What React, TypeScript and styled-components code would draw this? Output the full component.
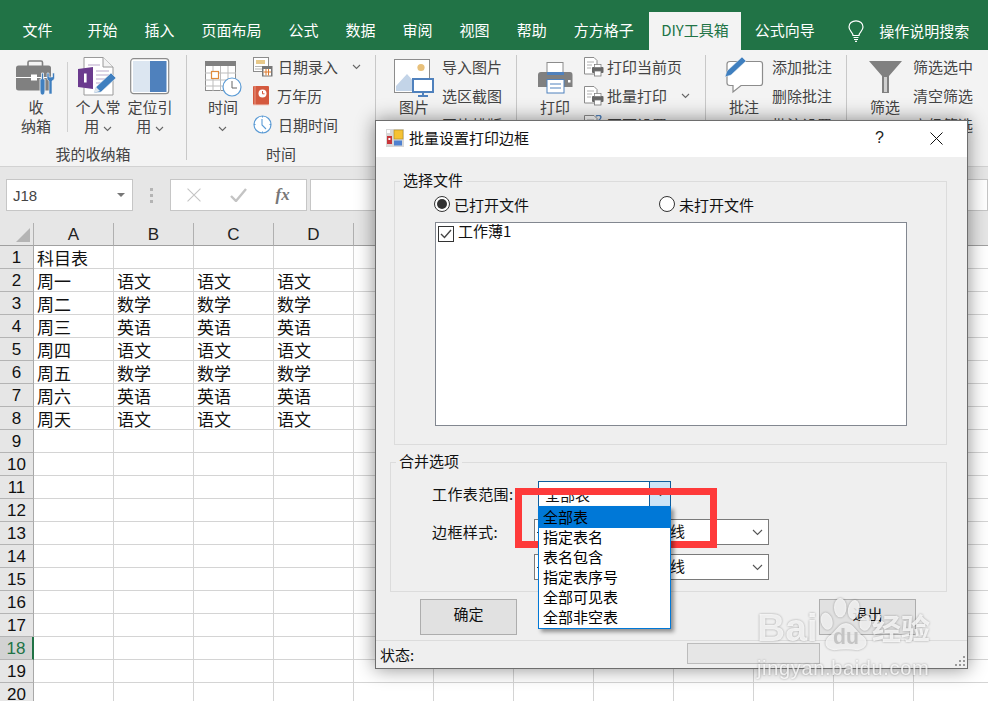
import React from 'react';
import styled, { createGlobalStyle } from 'styled-components';

const Global = createGlobalStyle`
  html, body {
    margin: 0;
    padding: 0;
    width: 988px;
    height: 701px;
    overflow: hidden;
    background: #fff;
    font-family: "Noto Sans CJK SC", "Liberation Sans", sans-serif;
  }
  * { box-sizing: border-box; }
`;

const Page = styled.div`
  position: relative;
  width: 988px;
  height: 701px;
  overflow: hidden;
  display: flex;
  flex-direction: column;
`;

/* ---------- tabs ---------- */

const TabBar = styled.div`
  height: 50px;
  flex: none;
  background: #217346;
  display: flex;
  align-items: flex-end;
  padding-left: 9px;
`;

const Tab = styled.div<{ $active?: boolean; $gap?: number }>`
  height: 38px;
  padding: 0 ${p => (p.$active ? 12.5 : 13.5)}px;
  margin-right: ${p => p.$gap ?? 0}px;
  margin-left: ${p => (p.$active ? 1.5 : 0)}px;
  font-size: 15px;
  line-height: 35px;
  white-space: nowrap;
  color: ${p => (p.$active ? '#217346' : '#fff')};
  background: ${p => (p.$active ? '#f3f3f3' : 'transparent')};
`;

const SearchHint = styled.div`
  display: flex;
  align-items: center;
  gap: 15px;
  height: 37px;
  margin: 0 0 1px 20px;
  color: #fff;
  font-size: 15px;
  white-space: nowrap;
`;

/* ---------- ribbon ---------- */

const Ribbon = styled.div`
  height: 117px;
  flex: none;
  background: #f3f3f3;
  border-bottom: 1px solid #d2d2d2;
  display: flex;
  padding-top: 5px;
  color: #444;
`;

const Group = styled.div<{ $width: number }>`
  width: ${p => p.$width}px;
  flex: none;
  height: 105px;
  border-right: 1px solid #c8c8c8;
  display: flex;
  flex-direction: column;
  &:last-child { border-right: 0; }
`;

const GroupItems = styled.div`
  flex: 1;
  display: flex;
  min-height: 0;
`;

const GroupLabel = styled.div`
  height: 22px;
  line-height: 20px;
  font-size: 15px;
  text-align: center;
  color: #444;
  margin-bottom: -6px;
`;

const BigButton = styled.div<{ $width: number; $left?: number }>`
  width: ${p => p.$width}px;
  margin-left: ${p => p.$left ?? 0}px;
  flex: none;
  display: flex;
  flex-direction: column;
  align-items: center;
`;

const BigIcon = styled.div<{ $lift?: number }>`
  height: 42px;
  padding-bottom: ${p => p.$lift ?? 0}px;
  display: flex;
  align-items: flex-end;
  justify-content: center;
`;

const BigLabel = styled.div`
  font-size: 15px;
  line-height: 19px;
  text-align: center;
  white-space: nowrap;
`;

const ItemDivider = styled.div`
  width: 1px;
  height: 70px;
  margin: 7px 0 0 6px;
  background: #d0d0d0;
  flex: none;
`;

const SmallColumn = styled.div<{ $left: number }>`
  margin-left: ${p => p.$left}px;
  margin-top: -3px;
  display: flex;
  flex-direction: column;
`;

const SmallRow = styled.div<{ $gap?: number }>`
  height: 29px;
  display: flex;
  align-items: center;
  gap: ${p => p.$gap ?? 5}px;
  font-size: 15px;
  white-space: nowrap;
`;

const RowChevron = styled.span<{ $left: number }>`
  display: inline-flex;
  margin-left: ${p => p.$left}px;
`;

/* ---------- formula bar ---------- */

const FormulaBar = styled.div`
  height: 56px;
  flex: none;
  background: #e6e6e6;
  display: flex;
  align-items: flex-start;
  padding: 12px 0 0 6px;
`;

const NameBox = styled.div`
  width: 127px;
  height: 32px;
  background: #fff;
  border: 1px solid #c6c6c6;
  display: flex;
  align-items: center;
  justify-content: space-between;
  padding: 0 7px 0 6px;
  font: 15px "Liberation Sans", sans-serif;
  color: #444;
`;

const Caret = styled.span`
  width: 0;
  height: 0;
  border-left: 4px solid transparent;
  border-right: 4px solid transparent;
  border-top: 4px solid #777;
`;

const Grip = styled.div`
  width: 37px;
  height: 32px;
  display: flex;
  flex-direction: column;
  align-items: center;
  justify-content: center;
  gap: 3px;
  span {
    width: 3px;
    height: 3px;
    background: #b4b4b4;
  }
`;

const FxBox = styled.div`
  width: 137px;
  height: 32px;
  background: #fff;
  border: 1px solid #c6c6c6;
  display: flex;
  align-items: center;
  justify-content: space-around;
  padding: 0 2px;
`;

const FxGlyph = styled.span`
  font: italic bold 17px "Liberation Serif", serif;
  color: #777;
`;

const FormulaInput = styled.div`
  flex: 1;
  height: 32px;
  margin-left: 3px;
  background: #fff;
  border: 1px solid #c6c6c6;
`;

/* ---------- sheet ---------- */

const Sheet = styled.div`
  flex: 1;
  display: grid;
  grid-template-columns: 34px repeat(12, 80px);
  grid-auto-rows: 23px;
  background: #fff;
  overflow: hidden;
`;

const Corner = styled.div`
  background: #e6e6e6;
  border-right: 1px solid #b0b0b0;
  border-bottom: 1px solid #a0a0a0;
  display: flex;
  align-items: flex-end;
  justify-content: flex-end;
  padding: 0 3px 3px 0;
  &::after {
    content: '';
    width: 0;
    height: 0;
    border-left: 14px solid transparent;
    border-bottom: 14px solid #b4b4b4;
  }
`;

const ColHead = styled.div`
  background: #e6e6e6;
  border-right: 1px solid #b0b0b0;
  border-bottom: 1px solid #a0a0a0;
  text-align: center;
  font: 17px/24px "Liberation Sans", sans-serif;
  color: #222;
`;

const RowHead = styled.div<{ $selected?: boolean }>`
  background: ${p => (p.$selected ? '#d2d2d2' : '#e6e6e6')};
  border-right: ${p => (p.$selected ? '2px solid #217346' : '1px solid #a8a8a8')};
  border-bottom: 1px solid #b4b4b4;
  text-align: center;
  font: 17px/24px "Liberation Sans", sans-serif;
  color: ${p => (p.$selected ? '#217346' : '#111')};
`;

const Cell = styled.div`
  border-right: 1px solid #d4d4d4;
  border-bottom: 1px solid #d4d4d4;
  padding-left: 3px;
  font-size: 17px;
  line-height: 24px;
  color: #111;
  white-space: nowrap;
`;

/* ---------- dialog ---------- */

const Dialog = styled.div`
  position: absolute;
  left: 375px;
  top: 120px;
  width: 593px;
  height: 549px;
  background: #efefef;
  border: 1px solid #6e6e6e;
  box-shadow: 0 0 18px rgba(0, 0, 0, 0.45);
  display: flex;
  flex-direction: column;
  font-size: 15px;
  color: #111;
`;

const TitleBar = styled.div`
  height: 36px;
  flex: none;
  background: #fff;
  display: flex;
  align-items: center;
  padding: 0 0 2px 10px;
  margin-bottom: 13px;
`;

const TitleText = styled.div`
  margin-left: 5px;
  flex: 1;
  color: #111;
  line-height: 20px;
`;

const TitleHelp = styled.div`
  width: 57px;
  text-align: center;
  font: 16px "Liberation Sans", sans-serif;
  color: #222;
`;

const TitleClose = styled.div`
  width: 57px;
  margin-right: 2px;
  display: flex;
  justify-content: center;
`;

const Section = styled.fieldset<{ $left: number; $width: number; $top?: number }>`
  margin: ${p => p.$top ?? 0}px 0 0 ${p => p.$left}px;
  width: ${p => p.$width}px;
  padding: 0;
  border: 1px solid #dcdcdc;
  flex: none;
  min-width: 0;
`;

const SectionTitle = styled.legend<{ $offset: number }>`
  margin-left: ${p => p.$offset}px;
  padding: 0 3px 3px;
  font-size: 15px;
  line-height: 19px;
`;

const FileBody = styled.div`
  padding: 2px 39px 18px 40px;
`;

const RadioRow = styled.div`
  height: 20px;
  display: flex;
  align-items: center;
  gap: 130px;
  margin-bottom: 8px;
  margin-left: -1px;
`;

const RadioItem = styled.div`
  display: flex;
  align-items: center;
  gap: 4px;
`;

const RadioMark = styled.span<{ $checked?: boolean }>`
  width: 16px;
  height: 16px;
  border-radius: 50%;
  border: 1px solid #333;
  background: #fff;
  display: flex;
  align-items: center;
  justify-content: center;
  &::after {
    content: '';
    width: 10px;
    height: 10px;
    border-radius: 50%;
    background: ${p => (p.$checked ? '#333' : 'transparent')};
  }
`;

const FileList = styled.div`
  width: 472px;
  height: 204px;
  background: #fff;
  border: 1px solid #828790;
  padding: 2px;
`;

const FileRow = styled.div`
  display: flex;
  gap: 4px;
`;

const FileName = styled.span`
  line-height: 12px;
`;

const CheckMark = styled.span`
  width: 16px;
  height: 16px;
  margin-top: 1px;
  border: 1px solid #333;
  background: #fff;
  display: flex;
  align-items: center;
  justify-content: center;
`;

const OptionBody = styled.div`
  padding: 8px 0 11px 41px;
`;

const OptionRow = styled.div<{ $top?: number }>`
  display: flex;
  align-items: center;
  height: 26px;
  margin-top: ${p => p.$top ?? 0}px;
`;

const OptionLabel = styled.div`
  width: 102px;
  flex: none;
  white-space: nowrap;
  line-height: 22px;
  letter-spacing: 0.4px;
`;

const Combo = styled.div<{ $width: number; $open?: boolean; $left?: number }>`
  position: relative;
  width: ${p => p.$width}px;
  height: 26px;
  margin-left: ${p => p.$left ?? 0}px;
  background: #fff;
  border: 1px solid ${p => (p.$open ? '#0f5d9c' : '#7a7a7a')};
  display: flex;
  align-items: center;
`;

const ComboValue = styled.div`
  flex: 1;
  padding-left: 6px;
  white-space: nowrap;
`;

const LineSample = styled.span`
  flex: none;
  width: 105px;
  padding-left: 2px;
  &::before {
    content: '';
    display: block;
    width: 100px;
    border-top: 1px solid #333;
  }
`;

const LineName = styled.span`
  flex: 1;
  white-space: nowrap;
  line-height: 20px;
  padding-bottom: 3px;
`;

const ComboArrow = styled.div<{ $open?: boolean }>`
  width: 21px;
  height: 100%;
  flex: none;
  display: flex;
  align-items: center;
  justify-content: center;
  background: ${p => (p.$open ? '#cce4f7' : 'transparent')};
  border-left: ${p => (p.$open ? '1px solid #0f5d9c' : '0')};
`;

const ComboMenu = styled.div`
  position: absolute;
  left: -1px;
  top: 24px;
  width: 133px;
  background: #fff;
  border: 1px solid #0078d7;
  box-shadow: 3px 3px 4px rgba(0, 0, 0, 0.4);
  z-index: 2;
`;

const ComboOption = styled.div<{ $selected?: boolean }>`
  height: ${p => (p.$selected ? 21 : 20)}px;
  line-height: ${p => (p.$selected ? 20 : 18)}px;
  padding-left: 4px;
  background: ${p => (p.$selected ? '#0078d7' : 'transparent')};
  color: #000;
`;

const ButtonRow = styled.div`
  display: flex;
  gap: 302px;
  padding: 7px 0 0 44px;
`;

const DialogButton = styled.div`
  width: 97px;
  height: 36px;
  background: #e1e1e1;
  border: 1px solid #adadad;
  text-align: center;
  line-height: 28px;
  color: #111;
`;

const StatusBar = styled.div`
  margin-top: 5px;
  flex: 1;
  border-top: 1px solid #dcdcdc;
  display: flex;
  align-items: flex-start;
  padding: 2px 0 0 4px;
  position: relative;
`;

const StatusText = styled.div`
  width: 307px;
  line-height: 22px;
  margin-top: 1px;
`;

const ProgressBar = styled.div`
  width: 133px;
  height: 21px;
  background: #e6e6e6;
  border: 1px solid #bcbcbc;
`;

const ResizeGrip = styled.svg`
  position: absolute;
  right: 1px;
  bottom: 1px;
`;

/* ---------- overlays ---------- */

const RedFrame = styled.div`
  position: absolute;
  left: 515px;
  top: 488px;
  width: 202px;
  height: 60px;
  border: 7px solid #fe3a3a;
`;

const Watermark = styled.div`
  position: absolute;
  left: 757px;
  top: 596px;
  width: 180px;
  color: rgba(255, 255, 255, 0.8);
  filter: drop-shadow(0 0 1px rgba(0, 0, 0, 0.4));
  pointer-events: none;
`;

const MarkTop = styled.div`
  display: flex;
  align-items: flex-end;
  height: 58px;
`;

const MarkLatin = styled.span`
  font: bold 39px/44px "Liberation Sans", sans-serif;
  margin-bottom: 4px;
  width: 62px;
  flex: none;
`;

const MarkCjk = styled.span`
  font-size: 29px;
  font-weight: 700;
  line-height: 36px;
  margin: 0 0 9px -1px;
  white-space: nowrap;
`;

const MarkUrl = styled.div`
  font: 20px/22px "Liberation Sans", sans-serif;
  letter-spacing: 0.65px;
  white-space: nowrap;
  margin-top: 3px;
`;

/* ---------- drawings ---------- */

const Chevron = ({ color = '#666' }: { color?: string }) => (
  <svg width="9" height="6" viewBox="0 0 9 6">
    <path d="M1 1 L4.5 4.5 L8 1" fill="none" stroke={color} strokeWidth="1.1" />
  </svg>
);

const ComboChevron = () => (
  <svg width="11" height="7" viewBox="0 0 11 7">
    <path d="M1 1 L5.5 5.5 L10 1" fill="none" stroke="#555" strokeWidth="1.1" />
  </svg>
);

const Bulb = () => (
  <svg width="16" height="22" viewBox="0 0 16 22" fill="none" stroke="#fff" strokeWidth="1.2">
    <path d="M5 15.5 C5 12.5 1 11 1 7 C1 3.3 4 .8 8 .8 C12 .8 15 3.3 15 7 C15 11 11 12.5 11 15.5 Z" />
    <path d="M5.5 17.5 H10.5 M6 19.5 H10 M7 21.3 H9" />
  </svg>
);

const BriefcaseIcon = () => (
  <svg width="40" height="38" viewBox="0 0 40 38">
    <path d="M12 8 V3.5 Q12 2 13.5 2 H25 Q26.5 2 26.5 3.5 V8" fill="none" stroke="#808080" strokeWidth="1.6" />
    <rect x="0" y="6.5" width="35" height="25" rx="2.5" fill="#808080" />
    <path d="M0 18.5 H35" stroke="#fff" strokeWidth="1" />
    <rect x="15" y="15.5" width="6" height="6" fill="#fff" />
    <path d="M25.5 14 V20 H24 V31 Q24 36 26.5 36 Q29 36 29 31 V20 H27.5 V14 Z" fill="#3f7fbf" stroke="#f3f3f3" strokeWidth=".8" />
    <path d="M31 14 V19 Q31 21 33 22 V35 H36 V22 Q38.5 21 38.5 19 V14 L36.5 14 V18 H33 V14 Z" fill="#3f7fbf" stroke="#f3f3f3" strokeWidth=".6" />
  </svg>
);

const NotebookIcon = () => (
  <svg width="40" height="40" viewBox="0 0 40 40">
    <path d="M6 .5 H25 L35 10 V38 H6 Z" fill="#fff" stroke="#9a9a9a" />
    <path d="M25 .5 V10 H35" fill="#f3f3f3" stroke="#9a9a9a" />
    <path d="M10 8 H22 M18 14 H31 M18 18 H31 M18 22 H31 M18 26 H28" stroke="#b9a7c9" strokeWidth="1.1" />
    <path d="M0 12 L15 10 V32 L0 30 Z" fill="#6b3a8e" />
    <rect x="6" y="16.5" width="2.6" height="9" fill="#fff" />
    <path d="M16 36 L18 30 L33 16 L38 21 L23 35 Z" fill="#3f7fbf" stroke="#f3f3f3" strokeWidth=".6" />
    <path d="M16 36 L18 30 L22 34 Z" fill="#dfe7ef" />
  </svg>
);

const PanelIcon = () => (
  <svg width="40" height="37" viewBox="0 0 40 37">
    <rect x=".7" y=".7" width="38" height="35" rx="3" fill="#fff" stroke="#8c8c8c" strokeWidth="1.2" />
    <rect x="3" y="3" width="17" height="31" fill="#dce6f1" />
    <rect x="20" y="3" width="16.5" height="31" fill="#4f81bd" />
  </svg>
);

const CalendarClockIcon = () => (
  <svg width="37" height="36" viewBox="0 0 37 36">
    <rect x=".5" y=".5" width="30" height="29" fill="#fff" stroke="#8c8c8c" />
    <rect x="0" y="0" width="31" height="5" fill="#808080" />
    <path d="M8 5 V30 M15.5 5 V30 M23 5 V30 M0 12 H31 M0 19 H31 M0 25 H31" stroke="#bdbdbd" strokeWidth="1" />
    <rect x="6.5" y="10.5" width="7" height="7" fill="#fff" stroke="#e08a3c" strokeWidth="1.2" />
    <circle cx="27" cy="26" r="9" fill="#fff" stroke="#5b9bd5" strokeWidth="1.2" />
    <path d="M27 20 V27 H32" fill="none" stroke="#666" strokeWidth="1" />
  </svg>
);

const DateEntryIcon = () => (
  <svg width="20" height="20" viewBox="0 0 20 20">
    <rect x=".5" y=".5" width="15" height="14" fill="#fff" stroke="#8c8c8c" />
    <rect x="3" y="3" width="9" height="4" fill="#e8c98a" />
    <path d="M2 9.5 H14 M2 12 H14" stroke="#b5b5b5" />
    <rect x="9" y="9" width="10.5" height="10.5" fill="#777" />
    <rect x="10.5" y="12" width="7.5" height="6.5" fill="#fff" />
    <path d="M13 12 V18.5 M15.5 12 V18.5 M10.5 15 H18" stroke="#dd7a2e" />
  </svg>
);

const AlmanacIcon = () => (
  <svg width="16" height="20" viewBox="0 0 16 20">
    <rect x="0" y="0" width="16" height="19" rx="1" fill="#d4593e" />
    <path d="M2 0 V19" stroke="#f0b5a6" strokeWidth=".7" />
    <path d="M0 19 H16" stroke="#f3d0c6" strokeWidth="1" />
    <circle cx="9.5" cy="7.5" r="4" fill="#fff" />
    <path d="M9.5 5 V7.8 H11.5" fill="none" stroke="#d4593e" />
  </svg>
);

const ClockIcon = () => (
  <svg width="19" height="19" viewBox="0 0 19 19">
    <circle cx="9.5" cy="9.5" r="8.5" fill="#fff" stroke="#5b9bd5" strokeWidth="1.2" />
    <path d="M9 4 V10 L13 14" fill="none" stroke="#5b9bd5" strokeWidth="1.1" />
    <path d="M9.5 1 V2.5 M9.5 16.5 V18 M1 9.5 H2.5 M16.5 9.5 H18" stroke="#5b9bd5" />
  </svg>
);

const PictureIcon = () => (
  <svg width="40" height="38" viewBox="0 0 40 38">
    <rect x=".5" y=".5" width="35" height="33" fill="#fff" stroke="#8c8c8c" />
    <circle cx="27" cy="8.5" r="3.6" fill="#e8c07a" />
    <path d="M2 32 L2 27 L13 15 L21 24 L28 32 Z" fill="#c3d4e8" />
    <rect x="19" y="20" width="20" height="13" fill="#fff" stroke="#4f81bd" strokeWidth="2" />
    <path d="M29 33 V36 M24 37 H34" stroke="#4f81bd" strokeWidth="2" />
  </svg>
);

const PrinterIcon = () => (
  <svg width="35" height="32" viewBox="0 0 35 32">
    <rect x="9" y="0.5" width="16" height="11" fill="#fff" stroke="#8c8c8c" />
    <path d="M3 10 H32 Q34.5 10 34.5 13 V25 H0 V13 Q0 10 3 10 Z" fill="#808080" />
    <rect x="9" y="10" width="17" height="3" fill="#4f81bd" />
    <rect x="30" y="18" width="2.5" height="2.5" fill="#fff" />
    <rect x="9" y="17.5" width="17" height="13.5" fill="#fff" stroke="#4f81bd" />
    <path d="M12 22 H23 M12 26 H23" stroke="#4f81bd" />
  </svg>
);

const PageIcon = ({ question }: { question?: boolean }) => (
  <svg width="20" height="20" viewBox="0 0 20 20">
    <path d="M.5 .5 H10 L13 3.5 V17 H.5 Z" fill="#fff" stroke="#8c8c8c" />
    <path d="M3 5 H10 M3 8 H8 M3 11 H7" stroke="#b0b0b0" />
    {question && <path d="M12 1 Q16 -1 17 2 Q17 4 14 6" fill="none" stroke="#4f81bd" strokeWidth="1.4" />}
    <rect x="8" y="10" width="11.5" height="6" rx="1" fill="#666" />
    <rect x="10.5" y="7.5" width="6.5" height="3" fill="#fff" stroke="#777" strokeWidth=".7" />
    <rect x="10.5" y="14" width="6.5" height="5" fill="#fff" stroke="#777" strokeWidth=".8" />
  </svg>
);

const CommentIcon = () => (
  <svg width="40" height="38" viewBox="0 0 40 38">
    <path d="M6 5.5 H36 Q38.5 5.5 38.5 8 V27 Q38.5 29.5 36 29.5 H17 L9 36 V29.5 H6 Q3 29.5 3 27 V8 Q3 5.5 6 5.5 Z" fill="#fff" stroke="#8c8c8c" strokeWidth="1.2" />
    <path d="M1 21 L3 15 L18 1 L22 5 L7 19 Z" fill="#3f7fbf" stroke="#f3f3f3" strokeWidth=".5" />
  </svg>
);

const FunnelIcon = () => (
  <svg width="33" height="33" viewBox="0 0 33 33">
    <path d="M0 0 H33 L20 15 V32 H13 V15 Z" fill="#808080" />
    <path d="M15 16 V31 H18 V16 Z" fill="#cfcfcf" />
  </svg>
);

const DialogIcon = () => (
  <svg width="18" height="18" viewBox="0 0 18 18">
    <rect width="18" height="18" fill="#d8d8d8" />
    <rect x="8" y="1" width="9" height="9" fill="#f6c233" stroke="#b08a20" strokeWidth=".6" />
    <rect x="1" y="7" width="5" height="8" fill="#c8353a" />
    <rect x="2.4" y="9" width="2" height="2" fill="#fff" />
    <rect x="8" y="11.5" width="8" height="5" fill="#4f81d0" />
    <rect x="1" y="1" width="3" height="3" fill="#fff" />
  </svg>
);

const CloseIcon = ({ color = '#111', size = 13 }: { color?: string; size?: number }) => (
  <svg width={size} height={size} viewBox="0 0 13 13">
    <path d="M.5 .5 L12.5 12.5 M12.5 .5 L.5 12.5" stroke={color} strokeWidth="1" fill="none" />
  </svg>
);

const PawIcon = () => (
  <svg width="54" height="58" viewBox="0 0 56 58">
    <g fill="rgba(255,255,255,.8)">
      <ellipse cx="8" cy="25" rx="6" ry="9" transform="rotate(-15 8 25)" />
      <ellipse cx="22" cy="11" rx="6.5" ry="10" />
      <ellipse cx="36" cy="13" rx="6" ry="10" transform="rotate(10 36 13)" />
      <ellipse cx="48" cy="27" rx="6" ry="8" transform="rotate(15 48 27)" />
      <path d="M28 27 C36 27 38 36 46 41 C54 48 46 56 38 55 C32 54 24 54 18 55 C8 56 3 48 10 41 C18 36 20 27 28 27 Z" />
    </g>
    <text x="28" y="49" textAnchor="middle" fontFamily="Liberation Sans, sans-serif" fontWeight="700" fontSize="22" fill="#c4c4c4">du</text>
  </svg>
);

/* ---------- data ---------- */

const tabs = ['文件', '开始', '插入', '页面布局', '公式', '数据', '审阅', '视图', '帮助', '方方格子'];
const columns = ['A', 'B', 'C', 'D', 'E', 'F', 'G', 'H', 'I', 'J', 'K', 'L'];
const rows: string[][] = [
  ['科目表'],
  ['周一', '语文', '语文', '语文'],
  ['周二', '数学', '数学', '数学'],
  ['周三', '英语', '英语', '英语'],
  ['周四', '语文', '语文', '语文'],
  ['周五', '数学', '数学', '数学'],
  ['周六', '英语', '英语', '英语'],
  ['周天', '语文', '语文', '语文'],
];
const rangeOptions = ['全部表', '指定表名', '表名包含', '指定表序号', '全部可见表', '全部非空表'];

const App = () => (
  <Page>
    <Global />
    <TabBar>
      {tabs.map((t, i) => (
        <Tab key={t} $gap={i === 0 ? 8 : 0}>{t}</Tab>
      ))}
      <Tab $active>DIY工具箱</Tab>
      <Tab>公式向导</Tab>
      <SearchHint>
        <Bulb />
        操作说明搜索
      </SearchHint>
    </TabBar>

    <Ribbon>
      <Group $width={187}>
        <GroupItems>
          <BigButton $width={50} $left={11}>
            <BigIcon><BriefcaseIcon /></BigIcon>
            <BigLabel>收<br />纳箱</BigLabel>
          </BigButton>
          <ItemDivider />
          <BigButton $width={52} $left={4}>
            <BigIcon><NotebookIcon /></BigIcon>
            <BigLabel>个人常<br />用 <Chevron /></BigLabel>
          </BigButton>
          <BigButton $width={52}>
            <BigIcon $lift={2}><PanelIcon /></BigIcon>
            <BigLabel>定位引<br />用 <Chevron /></BigLabel>
          </BigButton>
        </GroupItems>
        <GroupLabel>我的收纳箱</GroupLabel>
      </Group>

      <Group $width={189}>
        <GroupItems>
          <BigButton $width={40} $left={16}>
            <BigIcon><CalendarClockIcon /></BigIcon>
            <BigLabel>时间<br /><Chevron /></BigLabel>
          </BigButton>
          <SmallColumn $left={10}>
            <SmallRow><DateEntryIcon />日期录入<RowChevron $left={9}><Chevron /></RowChevron></SmallRow>
            <SmallRow $gap={8}><AlmanacIcon />万年历</SmallRow>
            <SmallRow $gap={6}><ClockIcon />日期时间</SmallRow>
          </SmallColumn>
        </GroupItems>
        <GroupLabel>时间</GroupLabel>
      </Group>

      <Group $width={141}>
        <GroupItems>
          <BigButton $width={40} $left={18}>
            <BigIcon><PictureIcon /></BigIcon>
            <BigLabel>图片</BigLabel>
          </BigButton>
          <SmallColumn $left={8}>
            <SmallRow>导入图片</SmallRow>
            <SmallRow>选区截图</SmallRow>
            <SmallRow>图片排版</SmallRow>
          </SmallColumn>
        </GroupItems>
      </Group>

      <Group $width={189}>
        <GroupItems>
          <BigButton $width={40} $left={18}>
            <BigIcon $lift={3}><PrinterIcon /></BigIcon>
            <BigLabel>打印</BigLabel>
          </BigButton>
          <SmallColumn $left={9}>
            <SmallRow $gap={3}><PageIcon />打印当前页</SmallRow>
            <SmallRow $gap={3}><PageIcon />批量打印<RowChevron $left={11}><Chevron /></RowChevron></SmallRow>
            <SmallRow $gap={3}><PageIcon question />页面设置</SmallRow>
          </SmallColumn>
        </GroupItems>
      </Group>

      <Group $width={141}>
        <GroupItems>
          <BigButton $width={40} $left={18}>
            <BigIcon $lift={3}><CommentIcon /></BigIcon>
            <BigLabel>批注</BigLabel>
          </BigButton>
          <SmallColumn $left={8}>
            <SmallRow>添加批注</SmallRow>
            <SmallRow>删除批注</SmallRow>
            <SmallRow>批注设置</SmallRow>
          </SmallColumn>
        </GroupItems>
      </Group>

      <Group $width={141}>
        <GroupItems>
          <BigButton $width={40} $left={18}>
            <BigIcon $lift={3}><FunnelIcon /></BigIcon>
            <BigLabel>筛选</BigLabel>
          </BigButton>
          <SmallColumn $left={8}>
            <SmallRow>筛选选中</SmallRow>
            <SmallRow>清空筛选</SmallRow>
            <SmallRow>高级筛选</SmallRow>
          </SmallColumn>
        </GroupItems>
      </Group>
    </Ribbon>

    <FormulaBar>
      <NameBox>J18<Caret /></NameBox>
      <Grip><span /><span /><span /></Grip>
      <FxBox>
        <CloseIcon color="#c4c4c4" size={14} />
        <svg width="17" height="14" viewBox="0 0 17 14">
          <path d="M1 8 L6 13 L16 1" fill="none" stroke="#c4c4c4" strokeWidth="2.4" />
        </svg>
        <FxGlyph>fx</FxGlyph>
      </FxBox>
      <FormulaInput />
    </FormulaBar>

    <Sheet>
      <Corner />
      {columns.map(c => <ColHead key={c}>{c}</ColHead>)}
      {Array.from({ length: 20 }, (_, r) => (
        <React.Fragment key={r}>
          <RowHead $selected={r === 17}>{r + 1}</RowHead>
          {columns.map((c, i) => <Cell key={c}>{rows[r]?.[i] ?? ''}</Cell>)}
        </React.Fragment>
      ))}
    </Sheet>

    <Dialog>
      <TitleBar>
        <DialogIcon />
        <TitleText>批量设置打印边框</TitleText>
        <TitleHelp>?</TitleHelp>
        <TitleClose><CloseIcon /></TitleClose>
      </TitleBar>

      <Section $left={18} $width={553}>
        <SectionTitle $offset={5}>选择文件</SectionTitle>
        <FileBody>
          <RadioRow>
            <RadioItem><RadioMark $checked />已打开文件</RadioItem>
            <RadioItem><RadioMark />未打开文件</RadioItem>
          </RadioRow>
          <FileList>
            <FileRow>
              <CheckMark>
                <svg width="12" height="10" viewBox="0 0 12 10">
                  <path d="M1 5 L4.5 8.5 L11 1" fill="none" stroke="#444" strokeWidth="1.4" />
                </svg>
              </CheckMark>
              <FileName>工作薄1</FileName>
            </FileRow>
          </FileList>
        </FileBody>
      </Section>

      <Section $left={14} $width={557} $top={6}>
        <SectionTitle $offset={5}>合并选项</SectionTitle>
        <OptionBody>
          <OptionRow>
            <OptionLabel>工作表范围:</OptionLabel>
            <Combo $width={133} $open $left={4}>
              <ComboValue>全部表</ComboValue>
              <ComboArrow $open><Chevron color="#444" /></ComboArrow>
              <ComboMenu>
                {rangeOptions.map((o, i) => (
                  <ComboOption key={o} $selected={i === 0}>{o}</ComboOption>
                ))}
              </ComboMenu>
            </Combo>
          </OptionRow>
          <OptionRow $top={12}>
            <OptionLabel>边框样式:</OptionLabel>
            <Combo $width={235}>
              <LineSample />
              <LineName>细实线</LineName>
              <ComboArrow><ComboChevron /></ComboArrow>
            </Combo>
          </OptionRow>
          <OptionRow $top={9}>
            <OptionLabel />
            <Combo $width={235}>
              <LineSample />
              <LineName>细实线</LineName>
              <ComboArrow><ComboChevron /></ComboArrow>
            </Combo>
          </OptionRow>
        </OptionBody>
      </Section>

      <ButtonRow>
        <DialogButton>确定</DialogButton>
        <DialogButton>退出</DialogButton>
      </ButtonRow>

      <StatusBar>
        <StatusText>状态:</StatusText>
        <ProgressBar />
        <ResizeGrip width="11" height="11" viewBox="0 0 11 11" fill="#9a9a9a">
          <rect x="8" y="0" width="2" height="2" />
          <rect x="4" y="4" width="2" height="2" />
          <rect x="8" y="4" width="2" height="2" />
          <rect x="0" y="8" width="2" height="2" />
          <rect x="4" y="8" width="2" height="2" />
          <rect x="8" y="8" width="2" height="2" />
        </ResizeGrip>
      </StatusBar>
    </Dialog>

    <RedFrame />

    <Watermark>
      <MarkTop>
        <MarkLatin>Bai</MarkLatin>
        <PawIcon />
        <MarkCjk>经验</MarkCjk>
      </MarkTop>
      <MarkUrl>jingyan.baidu.com</MarkUrl>
    </Watermark>
  </Page>
);

export default App;
